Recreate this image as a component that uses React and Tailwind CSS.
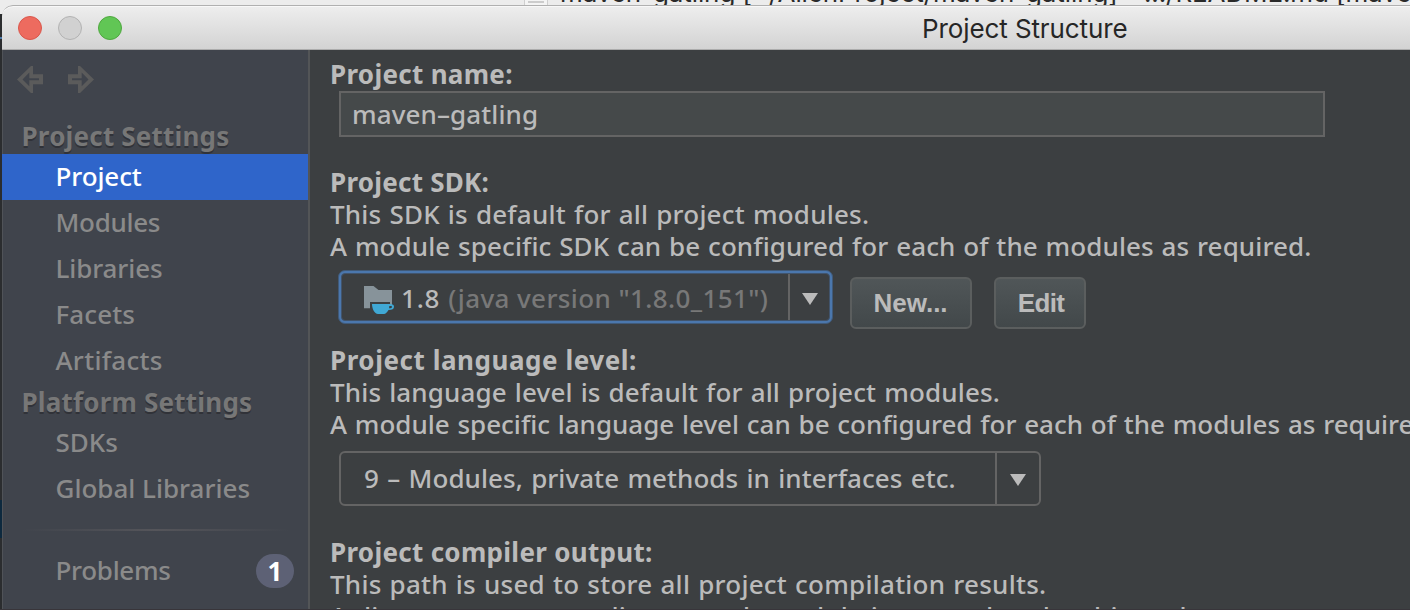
const Arrow = ({ flip }) => (
  <svg viewBox="0 0 26 27" className={flip ? 'h-[27px] w-[26px] -scale-x-100' : 'h-[27px] w-[26px]'}>
    <path
      fill="#5b5b5b"
      fillRule="evenodd"
      d="M0 13.5 14 0h2v8.3h10v10H16V27h-2ZM5.5 13.5 12.3 20.300V14.300H22v-2H12.300V6.500Z"
    />
  </svg>
);

const Triangle = () => (
  <svg viewBox="0 0 16 12" className="h-3 w-4">
    <path fill="#bbbbbb" d="M0 0h16L8 12Z" />
  </svg>
);

const SdkIcon = () => (
  <svg viewBox="0 0 30 28" className="h-7 w-[30px] shrink-0">
    <path fill="#87939a" d="M0 0h9.500L14.500 4H28v15H26V16H6v6.300H0Z" />
    <path
      fill="#40a8d4"
      fillRule="evenodd"
      d="M8 18h18c2.800 0 4 1 4 2.700 0 2.300-1.800 3.300-5.500 3.300-1.200 1.800-3 4-4.500 4h-6C10.500 28 8 22.500 8 18ZM25.300 20c0 .8-.1 1.500-.3 2.200 2 0 3-.4 3-1.300 0-.6-.5-.9-1.200-.9Z"
    />
  </svg>
);

const GROUPS = [
  {
    title: 'Project Settings',
    items: [
      ['Project', 'tracking-[-0.1px]'],
      ['Modules', 'tracking-[-0.3px]'],
      ['Libraries', 'tracking-[-0.1px]'],
      ['Facets', 'tracking-[0.1px]'],
      ['Artifacts', 'tracking-[0.3px]'],
    ],
  },
  {
    title: 'Platform Settings',
    items: [
      ['SDKs', 'tracking-[0px]'],
      ['Global Libraries', 'tracking-[0px]'],
    ],
  },
];

const Sidebar = () => (
  <aside className="flex w-[308px] shrink-0 flex-col border-r-2 border-l border-r-[#535557] border-l-[#505358] bg-[#40444c] font-medium">
    <div className="flex h-[68px] gap-[25px] pt-[15.500px] pl-[13.500px]">
      <Arrow />
      <Arrow flip />
    </div>
    {GROUPS.map((group) => (
      <section key={group.title}>
        <h2 className="h-9 pl-[18.500px] text-[26px] leading-9 font-bold tracking-[0.2px] text-[#777777] [text-shadow:0_2px_0_#303238]">
          {group.title}
        </h2>
        {group.items.map(([name, tracking]) => (
          <div
            key={name}
            className={`-ml-px h-[46px] pl-[53.500px] text-[26px] leading-[44px] ${tracking} ${
              name === 'Project' ? 'bg-[#2f65ca] text-white' : 'text-[#8a8a8a]'
            }`}
          >
            {name}
          </div>
        ))}
      </section>
    ))}
    <div className="mx-[18px] mt-[17px] h-[2px] bg-linear-to-r from-transparent via-[#55555a] to-transparent" />
    <div className="mt-[17px] flex h-[46px] items-center justify-between pr-[14px] pl-[52.500px]">
      <span className="pb-[2px] text-[26px] leading-[44px] tracking-[-0.3px] text-[#8a8a8a]">Problems</span>
      <span className="h-[34px] w-[38px] rounded-full bg-[#5d6175] text-center text-[26px] leading-[34px] font-bold text-white">
        1
      </span>
    </div>
  </aside>
);

const Button = ({ children, className }) => (
  <button
    className={`h-[52px] rounded-[6px] border-2 border-[#5b5e5e] bg-linear-to-b from-[#505658] to-[#42484a] pb-px font-['Liberation_Sans',sans-serif] text-[26px] leading-none font-bold text-[#bbbbbb] ${className}`}
  >
    {children}
  </button>
);

const Settings = () => (
  <main className="min-w-0 flex-1 overflow-hidden bg-[#3c3f41] pt-2 pl-5 text-[26px] leading-8 font-medium whitespace-nowrap text-[#bbbbbb]">
    <h3 className="font-bold tracking-[0.3px]">Project name:</h3>
    <div className="mt-px ml-[9px] flex h-[46px] w-[986px] items-center border-2 border-[#646464] bg-[#45494a] pl-[11px]">
      <span className="pb-px leading-[34px] tracking-[0.1px]">maven–gatling</span>
    </div>

    <h3 className="mt-[29px] font-bold tracking-[0.25px]">Project SDK:</h3>
    <p className="tracking-[0.22px] [word-spacing:1px]">This SDK is default for all project modules.</p>
    <p className="tracking-[0.1px] [word-spacing:0.9px]">A module specific SDK can be configured for each of the modules as required.</p>
    <div className="mt-2 ml-2 flex h-[60px] items-start">
      <div className="flex h-[54px] w-[495px] rounded-[7px] border border-[#405a79] bg-[#4b77ad] p-[2px]">
        <div className="flex flex-1 rounded-[4px] border border-[#41546c] bg-[#3c3f41]">
          <div className="flex flex-1 items-center border-r-2 border-[#646464] pl-[22px]">
            <div className="pt-[5px]"><SdkIcon /></div>
            <span className="ml-[7px] pt-px tracking-[0.8px]">1.8</span>
            <span className="ml-[8px] pt-px tracking-[0.4px] text-[#787878]">(java version "1.8.0_151")</span>
          </div>
          <div className="flex w-[39px] items-center justify-center pt-[4px]">
            <Triangle />
          </div>
        </div>
      </div>
      <Button className="mt-[7px] ml-[16.500px] w-[122px] tracking-[0px]">New...</Button>
      <Button className="mt-[7px] ml-[22px] w-[92px] pl-[3px] tracking-[-0.6px]">Edit</Button>
    </div>

    <h3 className="mt-[14px] font-bold tracking-[0.55px]">Project language level:</h3>
    <p className="tracking-[0.16px] [word-spacing:1px]">This language level is default for all project modules.</p>
    <p className="tracking-[0px] [word-spacing:1px]">A module specific language level can be configured for each of the modules as required.</p>
    <div className="mt-[11px] ml-[9px] flex h-[55px] w-[702px] rounded-[6px] border-2 border-[#646464]">
      <div className="flex flex-1 items-center border-r-2 border-[#646464] pb-px pl-[23px]">
        <span className="tracking-[0.05px] [word-spacing:1.500px]">9 – Modules, private methods in interfaces etc.</span>
      </div>
      <div className="flex w-[42px] items-center justify-center pt-[3px]">
        <Triangle />
      </div>
    </div>

    <h3 className="mt-[30px] font-bold tracking-[0.3px]">Project compiler output:</h3>
    <p className="tracking-[0.25px] [word-spacing:1px]">This path is used to store all project compilation results.</p>
    <p className="tracking-[0.1px] [word-spacing:1px]">A directory corresponding to each module is created under this path.</p>
  </main>
);

export default function App() {
  return (
    <div className="relative flex h-[610px] w-[1410px] flex-col overflow-hidden bg-[#2b2d2f] font-['Noto_Sans',sans-serif]">
      <div className="absolute inset-x-0 top-0 h-[14px] overflow-hidden bg-[#ececec] font-['Inter',sans-serif]">
        <div className="absolute -top-5 left-[524px] h-[26px] w-6 border-x border-[#cfcfcf] bg-[#f4f4f4]">
          <div className="mx-auto mt-[21px] h-[2px] w-4 bg-[#cccccc]" />
        </div>
        <div className="absolute -top-[23px] left-[560px] text-[26px] leading-8 tracking-[-0.1px] whitespace-nowrap text-[#2a2a2a]">
          maven-gatling [~/AllenProject/maven-gatling] - .../README.md [maven-gatling]
        </div>
      </div>
      <div className="absolute top-[37px] left-0 h-[2px] w-[2px] bg-[#4a78a8]" />
      <div className="absolute top-[500px] left-0 h-[38px] w-[2px] bg-[#0d293e]" />

      <div className="relative mt-[5px] ml-[2px] flex min-h-0 flex-1 flex-col overflow-hidden rounded-tl-[11px]">
        <header className="relative flex h-[45px] shrink-0 items-center rounded-tl-[11px] border-y border-t-[#b0b0b0] border-b-[#acacac] bg-linear-to-b from-[#eeeeee] to-[#d3d3d3] shadow-[inset_0_1px_0_#f8f8f8]">
          <div className="flex gap-4 pl-4">
            <span className="size-6 rounded-full border border-[#d9574c] bg-[#ed6b5f]" />
            <span className="size-6 rounded-full border border-[#b2b2b2] bg-[#d1d1d1]" />
            <span className="size-6 rounded-full border border-[#4fa73f] bg-[#61c655]" />
          </div>
          <h1 className="ml-[800px] pt-[2px] font-['Inter',sans-serif] text-[26px] leading-8 tracking-[-0.1px] text-[#262626]">
            Project Structure
          </h1>
        </header>
        <div className="flex min-h-0 flex-1">
          <Sidebar />
          <Settings />
        </div>
      </div>
      <div className="absolute inset-x-0 bottom-0 h-px bg-[#38353a]" />
    </div>
  );
}
